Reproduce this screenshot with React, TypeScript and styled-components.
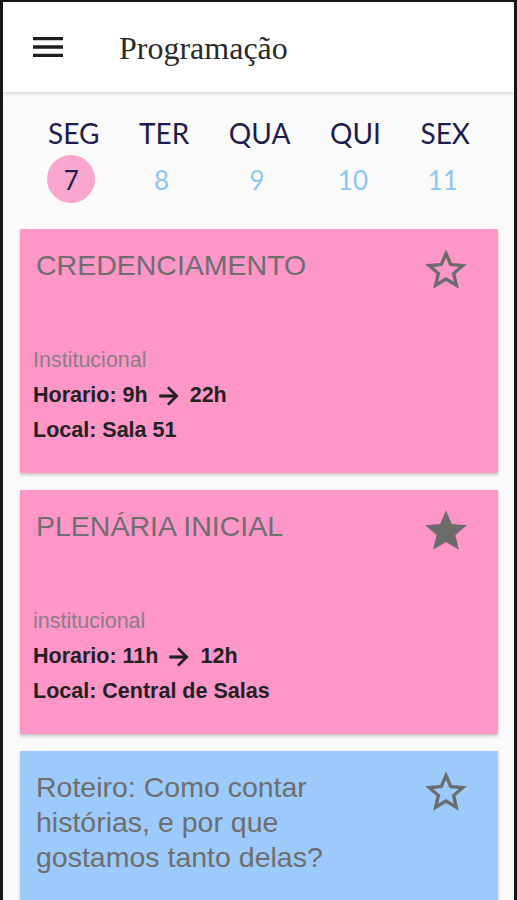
import styled, { createGlobalStyle } from "styled-components"

const GlobalStyle = createGlobalStyle`
html, body {
  margin: 0;
  padding: 0;
  background: #fafafa;
}
* {
  box-sizing: border-box;
}
`;

const days = [
  { label: "SEG", day: 7 },
  { label: "TER", day: 8 },
  { label: "QUA", day: 9 },
  { label: "QUI", day: 10 },
  { label: "SEX", day: 11 },
];

const events = [
  {
    title: "CREDENCIAMENTO",
    kind: "Institucional",
    from: "9h",
    to: "22h",
    place: "Sala 51",
    color: "#fe96c8",
    fav: false,
  },
  {
    title: "PLENÁRIA INICIAL",
    kind: "institucional",
    from: "11h",
    to: "12h",
    place: "Central de Salas",
    color: "#fe96c8",
    fav: true,
  },
  {
    title: "Roteiro: Como contar histórias, e por que gostamos tanto delas?",
    kind: "Oficina",
    from: "14h",
    to: "17h",
    place: "Sala 12",
    color: "#9ccafb",
    fav: false,
  },
];

const MenuIcon = () => (
  <svg width="40" height="40" viewBox="0 0 24 24">
    <path fill="#1e1e1e" d="M3 18h18v-2H3v2zm0-5h18v-2H3v2zm0-7v2h18V6H3z" />
  </svg>
);

const StarIcon = ({ filled }: { filled: boolean }) => (
  <svg width="50" height="50" viewBox="0 0 24 24">
    {filled ? (
      <path fill="#6c6c6c" d="M12 17.27L18.18 21l-1.64-7.03L22 9.24l-7.19-.61L12 2 9.19 8.63 2 9.24l5.46 4.73L5.82 21z" />
    ) : (
      <path
        fill="#6c6c6c"
        d="M22 9.24l-7.19-.62L12 2 9.19 8.63 2 9.24l5.46 4.73L5.82 21 12 17.27 18.18 21l-1.63-7.03L22 9.24zM12 15.4l-3.76 2.27 1-4.28-3.32-2.88 4.38-.38L12 6.1l1.71 4.04 4.38.38-3.32 2.88 1 4.28L12 15.4z"
      />
    )}
  </svg>
);

const ArrowIcon = () => (
  <svg width="28" height="28" viewBox="0 0 24 24">
    <path fill="#222" stroke="#222" strokeWidth="0.6" d="M12 4l-1.41 1.41L16.17 11H4v2h12.17l-5.58 5.59L12 20l8-8z" />
  </svg>
);

const App = () => {
  return (
    <Frame>
      <GlobalStyle />
      <Header>
        <MenuButton>
          <MenuIcon />
        </MenuButton>
        <Title>Programação</Title>
      </Header>

      <Days>
        {days.map((d, i) => (
          <Day key={d.label}>
            <DayLabel>{d.label}</DayLabel>
            <DayNumber $active={i === 0}>{d.day}</DayNumber>
          </Day>
        ))}
      </Days>

      <Cards>
        {events.map((ev) => (
          <Card key={ev.title} $color={ev.color}>
            <CardTop>
              <CardTitle>{ev.title}</CardTitle>
              <StarButton>
                <StarIcon filled={ev.fav} />
              </StarButton>
            </CardTop>
            <Details>
              <Kind>{ev.kind}</Kind>
              <Info>
                Horario: {ev.from}
                <ArrowIcon />
                {ev.to}
              </Info>
              <Info>Local: {ev.place}</Info>
            </Details>
          </Card>
        ))}
      </Cards>
    </Frame>
  )
}

export default App;

const Frame = styled.div`
height: 900px;
overflow: hidden;
border: 3px solid #161616;
border-top-width: 2px;
border-bottom: none;
background: #fafafa;
`;

const Header = styled.div`
height: 90px;
background: #fff;
display: flex;
align-items: center;
padding: 0 0 0 25px;
box-shadow: 0 2px 4px rgba(0, 0, 0, 0.14);
position: relative;
`;

const MenuButton = styled.div`
width: 40px;
height: 40px;
display: flex;
`;

const Title = styled.div`
margin-left: 51px;
padding-top: 2px;
font-family: "Liberation Serif", serif;
font-size: 32px;
color: #2a2a2a;
`;

const Days = styled.div`
display: flex;
justify-content: space-between;
padding: 25px 44px 0 45px;
`;

const Day = styled.div`
display: flex;
flex-direction: column;
align-items: center;
gap: 6px;
`;

const DayLabel = styled.div`
font-family: Lato, sans-serif;
font-size: 28px;
line-height: 32px;
color: #1d1d4d;
`;

const DayNumber = styled.div<{ $active: boolean }>`
width: 48px;
height: 48px;
margin-left: -5px;
border-radius: 50%;
display: flex;
align-items: center;
justify-content: center;
font-family: Lato, sans-serif;
font-size: 26px;
line-height: 48px;
padding-top: 2px;
color: ${(p) => (p.$active ? "#1d1d4d" : "#8cc6f4")};
background: ${(p) => (p.$active ? "#f9a7cf" : "transparent")};
`;

const Cards = styled.div`
display: flex;
flex-direction: column;
gap: 17px;
padding: 26px 16px 0 17px;
`;

const Card = styled.div<{ $color: string }>`
min-height: 244px;
background: ${(p) => p.$color};
box-shadow: 0 2px 3px rgba(0, 0, 0, 0.22);
padding: 16px 27px 25px 13px;
display: flex;
flex-direction: column;
justify-content: space-between;
font-family: "Liberation Sans", Arial, sans-serif;
`;

const CardTop = styled.div`
display: flex;
justify-content: space-between;
align-items: flex-start;
gap: 10px;
`;

const CardTitle = styled.div`
max-width: 330px;
padding: 3px 0 0 3px;
font-size: 28.5px;
line-height: 35px;
color: #6e6e6e;
`;

const StarButton = styled.div`
width: 50px;
height: 50px;
flex-shrink: 0;
`;

const Details = styled.div`
margin-top: 46px;
`;

const Kind = styled.div`
font-size: 21.5px;
line-height: 35px;
color: #8c7d88;
`;

const Info = styled.div`
display: flex;
align-items: center;
gap: 7px;
font-size: 21.5px;
line-height: 35px;
font-weight: 700;
color: #222;
`;
